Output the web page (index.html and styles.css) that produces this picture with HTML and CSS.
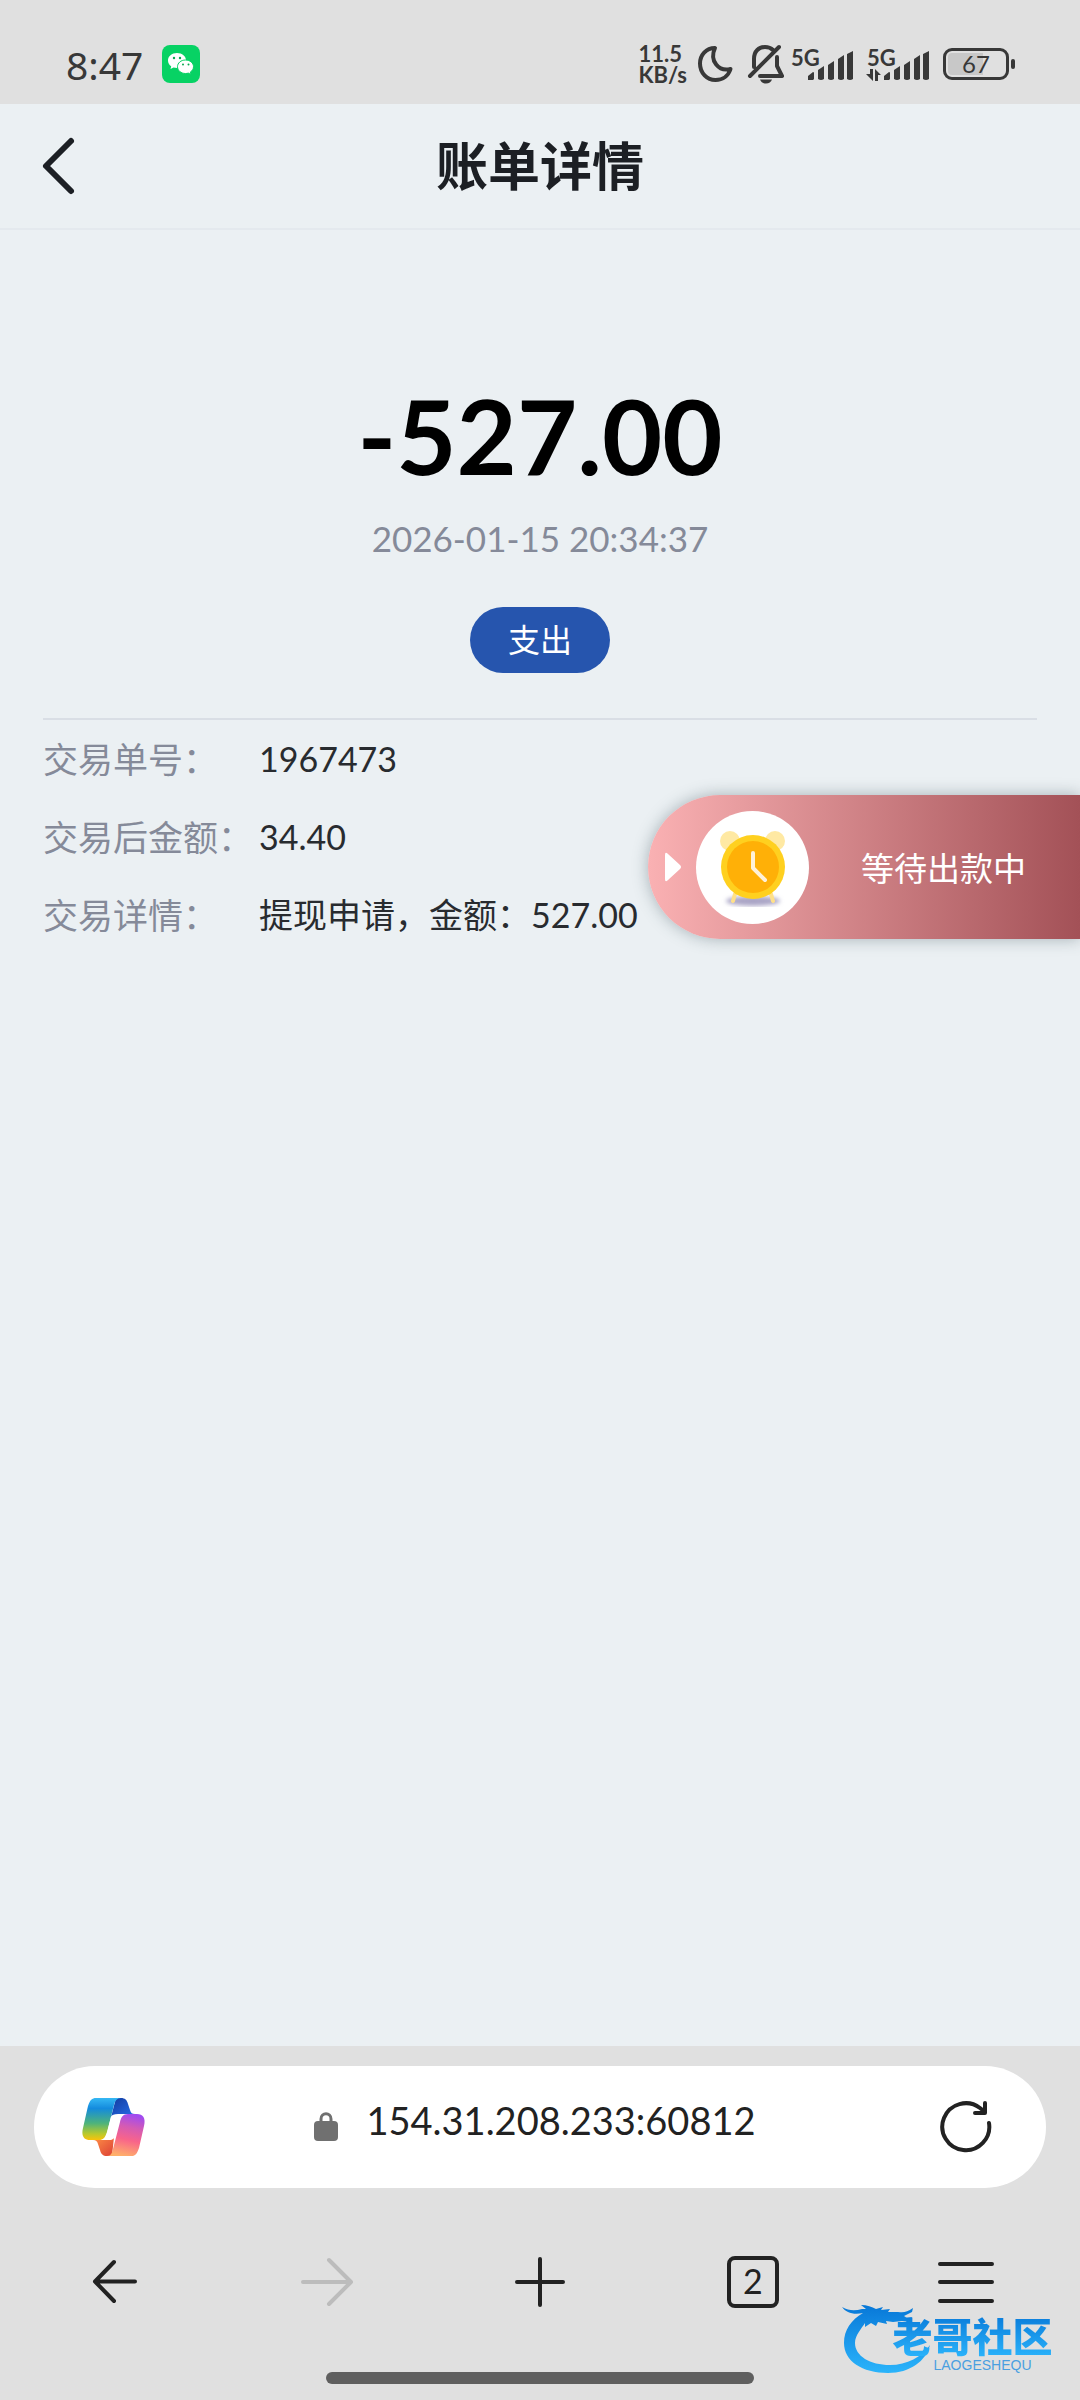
FILE: index.html
```html
<!DOCTYPE html>
<html lang="zh-CN">
<head>
    <meta charset="UTF-8">
    <meta name="viewport" content="width=device-width, initial-scale=1.0">
    <title>账单详情</title>
    <link rel="stylesheet" href="styles.css">
</head>
<body>
    <div class="status">
        <span class="time">8:47</span>
        <svg class="wechat" width="38" height="38" viewBox="0 0 38 38">
            <rect width="38" height="38" rx="8" fill="#07d264"/>
            <path d="M15 8c-5.200 0-9 3.300-9 7.500 0 2.400 1.200 4.400 3.200 5.800L8.500 24l3-1.600c1.100.3 2.200.5 3.500.5 5.200 0 9-3.300 9-7.400S20.200 8 15 8z" fill="#fff"/>
            <path d="M23.500 15c-4.600 0-8 3-8 6.700s3.400 6.800 8 6.800c1 0 2-.1 2.800-.4l2.700 1.400-.7-2.400c2-1.300 3.200-3.200 3.200-5.400 0-3.700-3.400-6.700-8-6.700z" fill="#fff" stroke="#07d264"/>
            <g fill="#07a850"><circle cx="12" cy="13" r="1.200"/><circle cx="18" cy="13" r="1.200"/><circle cx="21" cy="19.500" r="1"/><circle cx="26.500" cy="19.500" r="1"/></g>
        </svg>
        <span class="speed"><span>11.5</span><span>KB/s</span></span>
        <svg class="moon" width="36" height="38" viewBox="0 0 36 38" fill="none" stroke="#383838" stroke-width="4" stroke-linejoin="round">
            <path d="M18 3C9 3 3 10 3 18.500 3 28 10 35 18.500 35 26 35 31.500 30.500 33.500 24 22 27 12 16 18 3z"/>
        </svg>
        <svg class="bell" width="38" height="40" viewBox="0 0 38 40" fill="none" stroke="#383838" stroke-width="4" stroke-linecap="round" stroke-linejoin="round">
            <path d="M7 23V15C7 7 12 3 18 3c3 0 6 1 8 3M30 13v9l5 10H13M3 32L32 3"/>
            <path d="M13 35.500h12c-1 2.500-3 4-6 4s-5-1.500-6-4z" fill="#383838" stroke="none"/>
        </svg>
        <span class="signal">
            <span class="net">5G</span>
            <svg class="bars" width="63" height="34" viewBox="0 0 63 34" fill="#383838">
                <path d="M17 33v-4l5-4q1 0 1 1v6l-1 1zM27 32V23l6-4v13q-3 2-6 0zM37 32V18l6-4v18q-3 2-6 0zM47 32V12l6-4v24q-3 2-6 0zM56 32V7l6-3v28q-3 2-6 0z"/>
            </svg>
        </span>
        <span class="signal">
            <span class="net">5G</span>
            <svg class="bars" width="63" height="34" viewBox="0 0 63 34" fill="#383838">
                <path d="M17 33v-4l5-4q1 0 1 1v6l-1 1zM27 32V23l6-4v13q-3 2-6 0zM37 32V18l6-4v18q-3 2-6 0zM47 32V12l6-4v24q-3 2-6 0zM56 32V7l6-3v28q-3 2-6 0z"/>
                <path d="M3 22h3v12L-1 27h4zM8 34V22l6 6h-3v6z"/>
            </svg>
        </span>
        <span class="battery">67</span>
    </div>

    <header class="topbar">
        <button class="back" aria-label="返回">
            <svg width="36" height="60" viewBox="0 0 36 60" fill="none" stroke="#1c1f24" stroke-width="6" stroke-linecap="round" stroke-linejoin="round">
                <path d="M31 5L6 30l25 25"/>
            </svg>
        </button>
        <h1>账单详情</h1>
    </header>

    <main class="bill">
        <div class="amount">-527.00</div>
        <div class="date">2026-01-15 20:34:37</div>
        <span class="tag">支出</span>
        <dl class="detail">
            <div class="row"><dt>交易单号：</dt><dd>1967473</dd></div>
            <div class="row"><dt>交易后金额：</dt><dd>34.40</dd></div>
            <div class="row"><dt>交易详情：</dt><dd>提现申请，金额：527.00</dd></div>
        </dl>
    </main>

    <button class="waiting">
        <svg width="18" height="30" viewBox="0 0 18 30" fill="#fff">
            <path d="M1 3q0-4 3-1l12 11q2 2 0 4L4 28q-3 3-3-1z"/>
        </svg>
        <span class="clock">
            <svg width="76" height="80" viewBox="0 0 76 80">
                <defs>
                    <filter id="soft" x="-20%" y="-80%" width="140%" height="260%"><feGaussianBlur stdDeviation="2"/></filter>
                </defs>
                <ellipse cx="38" cy="74" rx="27" ry="5" fill="#aaa5c6" filter="url(#soft)"/>
                <circle cx="15" cy="14" r="10" fill="#ffe9a3"/>
                <circle cx="60" cy="14" r="10" fill="#ffe9a3"/>
                <path d="M20 67l-2 7M56 67l2 7" stroke="#ffe08a" stroke-width="4" stroke-linecap="round"/>
                <circle cx="38" cy="40" r="32" fill="#ffd01f"/>
                <circle cx="38" cy="40" r="26" fill="#ffb007"/>
                <path d="M38 26v15l12 12" fill="none" stroke="#fff1d8" stroke-width="4" stroke-linecap="round" stroke-linejoin="round"/>
            </svg>
        </span>
        <span class="waiting-text">等待出款中</span>
    </button>

    <footer class="browser">
        <div class="address">
            <button aria-label="Copilot">
                <svg width="64" height="60" viewBox="0 0 64 60">
                    <defs>
                        <linearGradient id="left" x1="0" y1="0" x2="0" y2="1">
                            <stop offset="0" stop-color="#35b8f4"/><stop offset=".25" stop-color="#148bdd"/><stop offset=".6" stop-color="#4db37c"/><stop offset=".85" stop-color="#b8c92c"/><stop offset="1" stop-color="#fac20b"/>
                        </linearGradient>
                        <linearGradient id="right" x1=".6" y1="0" x2=".4" y2="1">
                            <stop offset="0" stop-color="#a04bf0"/><stop offset=".3" stop-color="#d45bb4"/><stop offset=".6" stop-color="#f8648a"/><stop offset="1" stop-color="#ffb06a"/>
                        </linearGradient>
                        <linearGradient id="fold" x1="0" y1="0" x2="1" y2="1">
                            <stop offset="0" stop-color="#123a9e"/><stop offset="1" stop-color="#2870ec"/>
                        </linearGradient>
                        <linearGradient id="foot" x1="0" y1="0" x2="1" y2="1">
                            <stop offset="0" stop-color="#ff9347"/><stop offset="1" stop-color="#dc3f35"/>
                        </linearGradient>
                    </defs>
                    <path d="M34 1h5c4 0 6 2 7 6l2 6c1 3 2 4 5 4H36c-4 0-6 1-7 3z" fill="url(#fold)"/>
                    <path d="M30 59h-5c-4 0-6-2-7-6l-2-6c-1-3-2-4-5-4h13c5 0 6-1 8-3z" fill="url(#foot)"/>
                    <path d="M14 1h25c-4 0-6 3-7 7l-7 27c-2 6-4 8-8 8H8c-6 0-9-4-7-12L6 9c2-6 4-8 8-8z" fill="url(#left)"/>
                    <path d="M50 59H25c4 0 5-3 6-7l7-27c1-5 3-8 8-8h9c6 0 9 4 7 12l-5 22c-2 6-4 8-7 8z" fill="url(#right)"/>
                    <path d="M29 20c1-2 3-2 5-2h7c-2 2-3 4-4 8l-3 11c-1 4-3 6-7 6h-6c2-1 3-4 4-7z" fill="#fff"/>
                </svg>
            </button>
            <button class="url">
                <svg width="24" height="30" viewBox="0 0 24 30">
                    <rect y="9" width="24" height="20" rx="4" fill="#707070"/>
                    <path d="M7 11V7c0-7 10-7 10 0v4" fill="none" stroke="#707070" stroke-width="3"/>
                </svg>
                <span>154.31.208.233:60812</span>
            </button>
            <button aria-label="刷新">
                <svg width="56" height="56" viewBox="0 0 56 56" fill="none" stroke="#222" stroke-width="4" stroke-linecap="round" stroke-linejoin="round">
                    <path d="M51 24A23.500 23.500 0 1 1 42 9L47 13M47 4v10H37"/>
                </svg>
            </button>
        </div>
        <nav class="tools">
            <button aria-label="后退">
                <svg width="56" height="56" viewBox="0 0 56 56"><path d="M28 8L9 27.500 28 47M9 27.500h40"/></svg>
            </button>
            <button aria-label="前进" disabled>
                <svg width="56" height="56" viewBox="0 0 56 56"><path d="M30 6l22 22-22 22M51 28H4"/></svg>
            </button>
            <button aria-label="新建标签页">
                <svg width="56" height="56" viewBox="0 0 56 56"><path d="M28 5v46M5 28h46"/></svg>
            </button>
            <button aria-label="标签页"><span class="tabs">2</span></button>
            <button aria-label="菜单">
                <svg width="60" height="56" viewBox="0 0 60 56"><path d="M4 10h52M4 28h52M4 47h52"/></svg>
            </button>
        </nav>
        <div class="home"></div>
    </footer>

    <div class="watermark">
        <svg width="92" height="70" viewBox="0 0 92 70">
            <defs>
                <linearGradient id="dragon" x1="0" y1="0" x2="0" y2="1">
                    <stop offset="0" stop-color="#0878d8"/><stop offset="1" stop-color="#2bb4fb"/>
                </linearGradient>
            </defs>
            <path fill="url(#dragon)" d="M0 3c7 4 13 4 20 2l4 0-5-4c6 0 11 2 15 4l7-2-2 3 9-1-2 3 10 0c6 1 9 0 15-4l-1 4-8 4 3 2 5-1-2 5-8-1-9 1-7-1 1 3-9-2-2 4-5-3-6 4 0-4C20 24 13 31 13 39c0 13 15 22 35 22 17 0 32-8 40-20C84 57 68 69 46 69 20 69 2 57 2 39 2 26 9 16 21 9 12 11 4 9 0 3z"/>
        </svg>
        <div class="brand">
            <strong>老哥社区</strong>
            <small>LAOGESHEQU</small>
        </div>
    </div>
</body>
</html>
```
FILE: styles.css
```css
* {
    box-sizing: border-box;
}

body {
    margin: 0;
    min-height: 100vh;
    display: flex;
    flex-direction: column;
    position: relative;
    background: #ebf0f3;
    font-family: Lato, "Noto Sans CJK SC", sans-serif;
    font-size: 34px;
    color: #282b2f;
}

button {
    border: 0;
    padding: 0;
    background: none;
    font: inherit;
    color: inherit;
    display: flex;
    align-items: center;
    justify-content: center;
}

svg {
    display: block;
    flex: none;
}

/* phone status bar */
.status {
    height: 104px;
    padding: 24px 71px 0 66px;
    display: flex;
    align-items: center;
    background: #e0e0e0;
    color: #383838;
}

.time {
    font-family: "Noto Sans", sans-serif;
    font-size: 39px;
}

.wechat {
    margin-left: 19px;
    margin-right: auto;
}

.speed {
    display: grid;
    font-size: 22px;
    line-height: 21px;
    font-weight: bold;
}

.moon {
    margin-left: 10px;
}

.bell {
    margin: 0 6px 0 14px;
}

.signal {
    display: grid;
    margin-right: 13px;
}

.net, .bars {
    grid-area: 1 / 1;
}

.net {
    font-size: 22px;
    line-height: 21px;
    font-weight: bold;
}

.bars {
    overflow: visible;
}

.battery {
    width: 66px;
    height: 32px;
    border: 3px solid #383838;
    border-radius: 9px;
    background: linear-gradient(90deg, #c8c8c8 62%, #e0e0e0 62%) content-box;
    padding: 2px;
    font-size: 24px;
    line-height: 22px;
    text-align: center;
    position: relative;
}

.battery::after {
    content: "";
    position: absolute;
    right: -9px;
    top: 8px;
    width: 4px;
    height: 10px;
    border-radius: 2px;
    background: #383838;
}

/* page header */
.topbar {
    height: 126px;
    padding: 0 40px;
    display: grid;
    grid-template-columns: 1fr auto 1fr;
    align-items: center;
    border-bottom: 2px solid #e4e9ee;
}

.back {
    justify-self: start;
}

.topbar h1 {
    margin: 0;
    font-size: 52px;
    line-height: 70px;
    color: #1c1f24;
}

/* bill */
.bill {
    flex: 1;
    padding: 140px 43px 0;
    display: flex;
    flex-direction: column;
    align-items: center;
}

.amount {
    font-size: 104px;
    line-height: 130px;
    font-weight: bold;
    color: #000;
}

.date {
    margin-top: 15px;
    font-size: 35px;
    line-height: 46px;
    color: #858a99;
}

.tag {
    margin-top: 46px;
    padding: 0 38px;
    border-radius: 33px;
    background: #2655ae;
    color: #fff;
    font-size: 32px;
    line-height: 66px;
}

.detail {
    align-self: stretch;
    margin: 45px 0 0;
    border-top: 2px solid #d9dee5;
}

.row {
    display: flex;
    line-height: 78px;
    white-space: nowrap;
}

.row dt {
    width: 216px;
    font-size: 35px;
    color: #858a99;
}

.row dd {
    margin: 0;
}

/* floating payout notice */
.waiting {
    position: absolute;
    top: 795px;
    right: 0;
    width: 40%;
    height: 144px;
    padding: 0 54px 0 16px;
    justify-content: flex-start;
    gap: 14px;
    border-radius: 72px 0 0 72px;
    background: linear-gradient(90deg, #fab1b3, #a35157);
    box-shadow: 0 0 16px rgba(60, 80, 90, .4);
    color: #fff;
}

.clock {
    width: 113px;
    height: 113px;
    flex: none;
    border-radius: 50%;
    background: #fff;
    display: flex;
    align-items: center;
    justify-content: center;
}

.waiting-text {
    margin-left: auto;
    font-size: 33px;
    white-space: nowrap;
}

/* browser bar */
.browser {
    padding: 20px 0 16px;
    background: #e0e0e0;
    color: #222;
}

.address {
    height: 122px;
    margin: 0 34px;
    padding: 0 52px 0 48px;
    display: flex;
    align-items: center;
    justify-content: space-between;
    border-radius: 61px;
    background: #fff;
}

.url {
    gap: 28px;
    margin-right: 14px;
    font-size: 38px;
}

.url span {
    padding-bottom: 14px;
}

.tools {
    height: 184px;
    padding: 4px 8px 0;
    display: grid;
    grid-template-columns: repeat(5, 1fr);
}

.tools svg {
    fill: none;
    stroke: #222;
    stroke-width: 4;
    stroke-linecap: round;
    stroke-linejoin: round;
}

.tools button:disabled svg {
    stroke: #bcbcbc;
}

.tabs {
    width: 52px;
    height: 52px;
    border: 4px solid #222;
    border-radius: 8px;
    font-size: 34px;
    line-height: 42px;
}

.home {
    width: 428px;
    height: 12px;
    margin: 0 auto;
    border-radius: 6px;
    background: #5f5f5f;
}

/* site mark over the bottom corner */
.watermark {
    position: absolute;
    right: 18px;
    bottom: 26px;
    width: 220px;
    display: grid;
    align-items: end;
}

.watermark svg, .brand {
    grid-area: 1 / 1;
}

.brand {
    padding: 0 0 2px 41px;
    display: flex;
    flex-direction: column;
    align-items: center;
}

.brand strong {
    font-family: "Noto Sans CJK SC", sans-serif;
    font-size: 40px;
    font-weight: 900;
    line-height: 46px;
    background: linear-gradient(#0878d8, #2bb4fb);
    background-clip: text;
    color: transparent;
}

.brand small {
    padding-left: 20px;
    font-family: "Liberation Sans", sans-serif;
    font-size: 14px;
    line-height: 14px;
    color: #4a9fe0;
}
```
